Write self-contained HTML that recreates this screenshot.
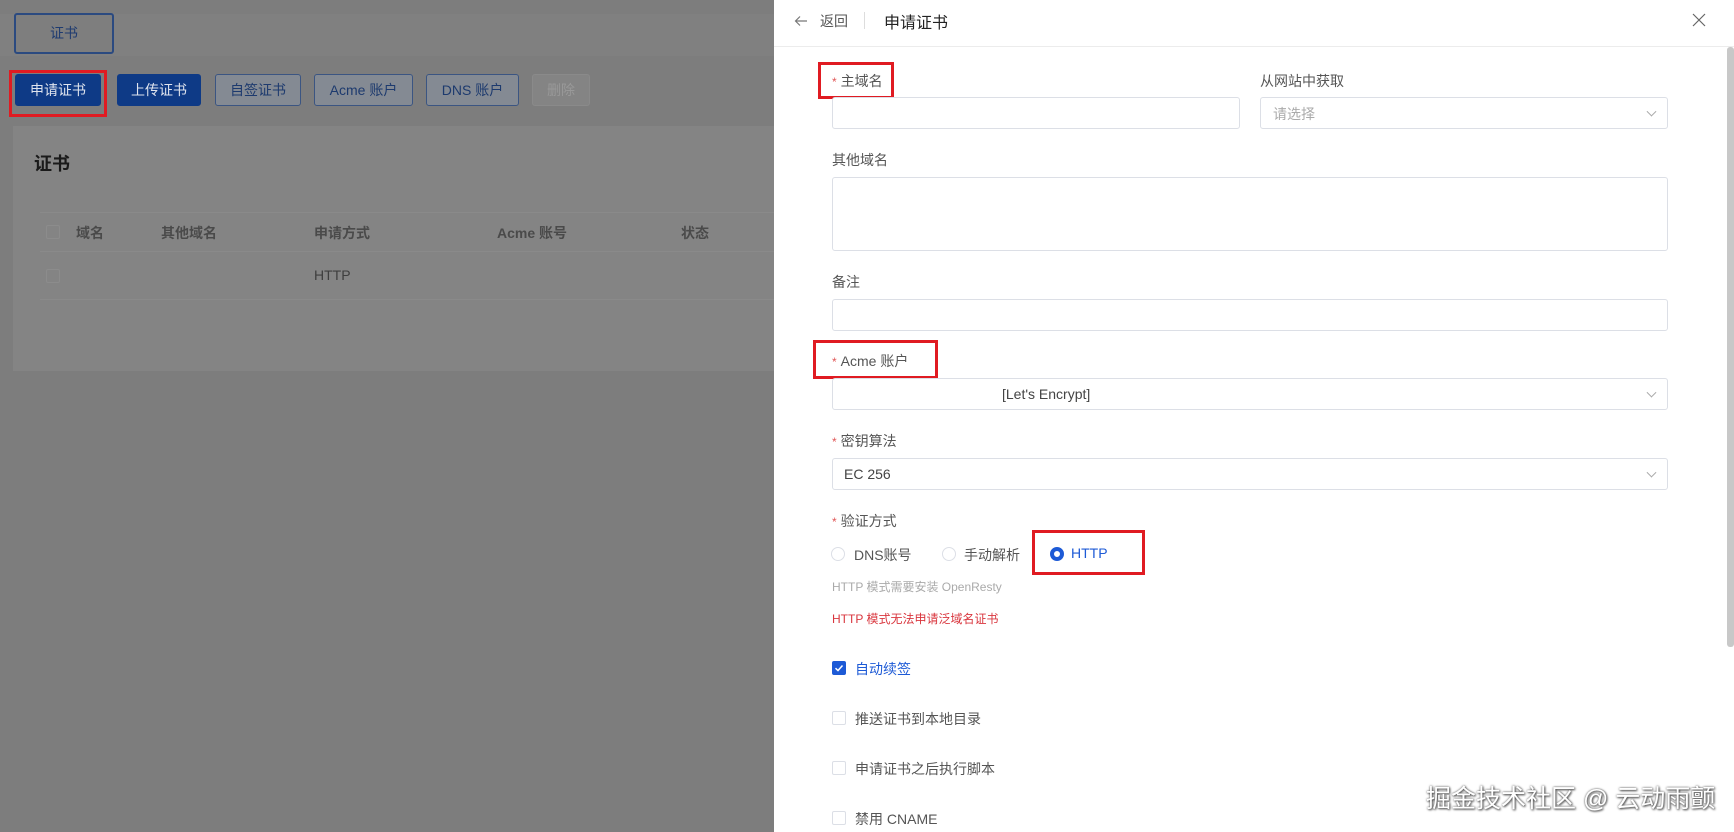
<!DOCTYPE html>
<html><head><meta charset="utf-8">
<style>
*{box-sizing:border-box;margin:0;padding:0}
body{width:1734px;height:832px;overflow:hidden;position:relative;background:#7d7d7d;font-family:"Liberation Sans","Noto Sans CJK SC",sans-serif;font-size:14px;color:#333}
.a{position:absolute}
.btn{position:absolute;top:74px;height:32px;border-radius:3px;font-size:14px;line-height:30px;text-align:center;border:1px solid #3b5582;color:#1d3a6e;background:#848a93}
.btnp{background:#0e3a86;border-color:#0e3a86;color:#dfe4ee}
.red{position:absolute;border:3px solid #e01b22}
.lbl{position:absolute;left:832px;font-size:14px;color:#555}
.lbl b{color:#e05656;font-weight:normal;font-size:12px;margin-right:4px}
.inp{position:absolute;border:1px solid #dcdfe6;border-radius:3px;background:#fff}
.chev{position:absolute;right:12px;top:50%;width:7px;height:7px;border-right:1px solid #aaa;border-bottom:1px solid #aaa;transform:translateY(-70%) rotate(45deg)}
.cb{position:absolute;left:832px;width:14px;height:14px;border:1px solid #dcdfe6;border-radius:2px;background:#fff}
.ct{position:absolute;left:855px;font-size:14px;color:#555}
</style></head><body>
<!-- left dimmed page -->
<div class="a" style="left:0;top:14px;width:774px;height:42px;background:#808080"></div>
<div class="a" style="left:14px;top:13px;width:100px;height:41px;border:2px solid #2b4a80;border-radius:3px;background:#7e7e7e;color:#1e3b70;text-align:center;line-height:37px;font-size:14px">证书</div>
<div class="btn btnp" style="left:15px;width:86px">申请证书</div>
<div class="btn btnp" style="left:117px;width:84px">上传证书</div>
<div class="btn" style="left:215px;width:86px">自签证书</div>
<div class="btn" style="left:314px;width:99px">Acme 账户</div>
<div class="btn" style="left:426px;width:93px">DNS 账户</div>
<div class="btn" style="left:532px;width:58px;border-color:#8a8a8a;color:#999;background:#848484">删除</div>
<div class="red" style="left:9px;top:70px;width:98px;height:47px"></div>
<div class="a" style="left:13px;top:126px;width:761px;height:245px;background:#848484"></div>
<div class="a" style="left:34px;top:150px;font-size:18px;font-weight:bold;color:#1a1a1a">证书</div>
<div class="a" style="left:40px;top:212px;width:734px;height:40px;border-top:1px solid #8a8a8a;border-bottom:1px solid #8a8a8a;font-weight:bold;color:#4a4a4a;font-size:14px">
<div class="a" style="left:6px;top:12px;width:14px;height:14px;border:1px solid #8c8c8c;border-radius:2px"></div>
<span class="a" style="left:36px;top:10px">域名</span><span class="a" style="left:121px;top:10px">其他域名</span><span class="a" style="left:274px;top:10px">申请方式</span><span class="a" style="left:457px;top:10px">Acme 账号</span><span class="a" style="left:641px;top:10px">状态</span></div>
<div class="a" style="left:40px;top:252px;width:734px;height:48px;border-bottom:1px solid #8a8a8a;color:#3e3e3e">
<div class="a" style="left:6px;top:17px;width:14px;height:14px;border:1px solid #8c8c8c;border-radius:2px"></div>
<span class="a" style="left:274px;top:15px">HTTP</span></div>

<!-- drawer -->
<div class="a" style="left:774px;top:0;width:960px;height:832px;background:#fff"></div>
<div class="a" style="left:774px;top:46px;width:960px;height:1px;background:#ececec"></div>
<svg class="a" style="left:794px;top:14px" width="14" height="14" viewBox="0 0 14 14"><path d="M13 7H2M6 2.5L1.5 7 6 11.5" fill="none" stroke="#777" stroke-width="1.2"/></svg>
<div class="a" style="left:820px;top:11px;font-size:14px;color:#555">返回</div>
<div class="a" style="left:864px;top:12px;width:1px;height:17px;background:#ddd"></div>
<div class="a" style="left:884px;top:9px;font-size:16px;color:#222">申请证书</div>
<svg class="a" style="left:1692px;top:13px" width="14" height="14" viewBox="0 0 14 14"><path d="M1 1L13 13M13 1L1 13" stroke="#666" stroke-width="1.2"/></svg>
<div class="a" style="left:1727px;top:47px;width:7px;height:600px;background:#c8c8c8;border-radius:3px"></div>

<div class="lbl" style="top:71px"><b>*</b>主域名</div>
<div class="red" style="left:818px;top:62px;width:76px;height:37px"></div>
<div class="lbl" style="left:1260px;top:71px">从网站中获取</div>
<div class="inp" style="left:832px;top:97px;width:408px;height:32px"></div>
<div class="inp" style="left:1260px;top:97px;width:408px;height:32px;color:#aaa;padding:6px 12px">请选择<span class="chev"></span></div>
<div class="lbl" style="top:150px">其他域名</div>
<div class="inp" style="left:832px;top:177px;width:836px;height:74px"></div>
<div class="lbl" style="top:272px">备注</div>
<div class="inp" style="left:832px;top:299px;width:836px;height:32px"></div>
<div class="lbl" style="top:351px"><b>*</b>Acme 账户</div>
<div class="red" style="left:813px;top:340px;width:125px;height:39px"></div>
<div class="inp" style="left:832px;top:378px;width:836px;height:32px;color:#444"><span class="a" style="left:169px;top:7px">[Let's Encrypt]</span><span class="chev"></span></div>
<div class="lbl" style="top:431px"><b>*</b>密钥算法</div>
<div class="inp" style="left:832px;top:458px;width:836px;height:32px;color:#444"><span class="a" style="left:11px;top:7px">EC 256</span><span class="chev"></span></div>
<div class="lbl" style="top:511px"><b>*</b>验证方式</div>
<div class="a" style="left:831px;top:547px;width:14px;height:14px;border:1px solid #dcdfe6;border-radius:50%"></div>
<div class="a" style="left:854px;top:545px;color:#555">DNS账号</div>
<div class="a" style="left:942px;top:547px;width:14px;height:14px;border:1px solid #dcdfe6;border-radius:50%"></div>
<div class="a" style="left:964px;top:545px;color:#555">手动解析</div>
<div class="a" style="left:1050px;top:547px;width:14px;height:14px;border:4px solid #1d5ad6;border-radius:50%;background:#fff"></div>
<div class="a" style="left:1071px;top:545px;color:#1d5ad6">HTTP</div>
<div class="red" style="left:1032px;top:530px;width:113px;height:45px"></div>
<div class="a" style="left:832px;top:578px;font-size:12px;color:#aaa">HTTP 模式需要安装 OpenResty</div>
<div class="a" style="left:832px;top:610px;font-size:12px;color:#d9363e">HTTP 模式无法申请泛域名证书</div>
<div class="cb" style="top:661px;background:#1d5ad6;border-color:#1d5ad6"><svg width="12" height="12" viewBox="0 0 12 12" style="position:absolute;left:0;top:0"><path d="M2.5 6.2L5 8.5 9.5 3.5" fill="none" stroke="#fff" stroke-width="1.5"/></svg></div>
<div class="ct" style="top:659px;color:#1d5ad6">自动续签</div>
<div class="cb" style="top:711px"></div><div class="ct" style="top:709px">推送证书到本地目录</div>
<div class="cb" style="top:761px"></div><div class="ct" style="top:759px">申请证书之后执行脚本</div>
<div class="cb" style="top:811px"></div><div class="ct" style="top:809px">禁用 CNAME</div>
<div class="a" style="left:1426px;top:779px;font-size:25px;color:#fff;text-shadow:0 0 2px #555,1px 1px 2px #444;white-space:nowrap">掘金技术社区 @ 云动雨颤</div>
</body></html>
